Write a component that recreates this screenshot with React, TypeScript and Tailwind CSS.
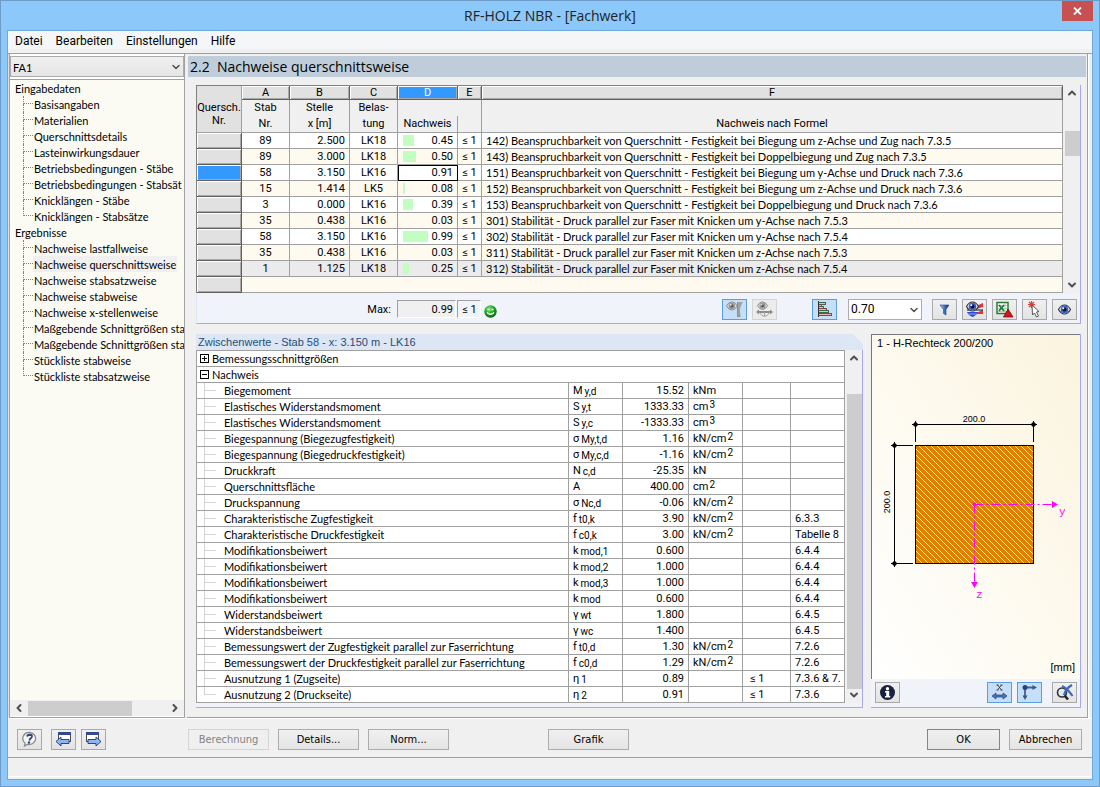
import { ReactNode, useState } from 'react';
import { ChevronDown, ChevronLeft, ChevronRight, ChevronUp } from 'lucide-react';

const menuItems = ['Datei', 'Bearbeiten', 'Einstellungen', 'Hilfe'];

const tree = [
  {
    label: 'Eingabedaten',
    items: [
      'Basisangaben',
      'Materialien',
      'Querschnittsdetails',
      'Lasteinwirkungsdauer',
      'Betriebsbedingungen - Stäbe',
      'Betriebsbedingungen - Stabsät',
      'Knicklängen - Stäbe',
      'Knicklängen - Stabsätze',
    ],
  },
  {
    label: 'Ergebnisse',
    items: [
      'Nachweise lastfallweise',
      'Nachweise querschnittsweise',
      'Nachweise stabsatzweise',
      'Nachweise stabweise',
      'Nachweise x-stellenweise',
      'Maßgebende Schnittgrößen sta',
      'Maßgebende Schnittgrößen sta',
      'Stückliste stabweise',
      'Stückliste stabsatzweise',
    ],
  },
];

const columns = [
  { key: 'A', top: 'Stab', bottom: 'Nr.' },
  { key: 'B', top: 'Stelle', bottom: 'x [m]' },
  { key: 'C', top: 'Belas-', bottom: 'tung' },
  { key: 'D', top: '', bottom: 'Nachweis' },
  { key: 'E', top: '', bottom: '' },
  { key: 'F', top: '', bottom: 'Nachweis nach Formel' },
];

const rows = [
  { stab: 89, x: '2.500', lk: 'LK18', value: '0.45', text: '142) Beanspruchbarkeit von Querschnitt - Festigkeit bei Biegung um z-Achse und Zug nach 7.3.5' },
  { stab: 89, x: '3.000', lk: 'LK18', value: '0.50', text: '143) Beanspruchbarkeit von Querschnitt - Festigkeit bei Doppelbiegung und Zug nach 7.3.5' },
  { stab: 58, x: '3.150', lk: 'LK16', value: '0.91', text: '151) Beanspruchbarkeit von Querschnitt - Festigkeit bei Biegung um y-Achse und Druck nach 7.3.6' },
  { stab: 15, x: '1.414', lk: 'LK5', value: '0.08', text: '152) Beanspruchbarkeit von Querschnitt - Festigkeit bei Biegung um z-Achse und Druck nach 7.3.6' },
  { stab: 3, x: '0.000', lk: 'LK16', value: '0.39', text: '153) Beanspruchbarkeit von Querschnitt - Festigkeit bei Doppelbiegung und Druck nach 7.3.6' },
  { stab: 35, x: '0.438', lk: 'LK16', value: '0.03', text: '301) Stabilität - Druck parallel zur Faser mit Knicken um y-Achse nach 7.5.3' },
  { stab: 58, x: '3.150', lk: 'LK16', value: '0.99', text: '302) Stabilität - Druck parallel zur Faser mit Knicken um y-Achse nach 7.5.4' },
  { stab: 35, x: '0.438', lk: 'LK16', value: '0.03', text: '311) Stabilität - Druck parallel zur Faser mit Knicken um z-Achse nach 7.5.3' },
  { stab: 1, x: '1.125', lk: 'LK18', value: '0.25', text: '312) Stabilität - Druck parallel zur Faser mit Knicken um z-Achse nach 7.5.4' },
];

// label, symbol, index, value, unit, exponent, limit, clause
const details = [
  ['Biegemoment', 'M', 'y,d', '15.52', 'kNm', '', '', ''],
  ['Elastisches Widerstandsmoment', 'S', 'y,t', '1333.33', 'cm', '3', '', ''],
  ['Elastisches Widerstandsmoment', 'S', 'y,c', '-1333.33', 'cm', '3', '', ''],
  ['Biegespannung (Biegezugfestigkeit)', 'σ', 'My,t,d', '1.16', 'kN/cm', '2', '', ''],
  ['Biegespannung (Biegedruckfestigkeit)', 'σ', 'My,c,d', '-1.16', 'kN/cm', '2', '', ''],
  ['Druckkraft', 'N', 'c,d', '-25.35', 'kN', '', '', ''],
  ['Querschnittsfläche', 'A', '', '400.00', 'cm', '2', '', ''],
  ['Druckspannung', 'σ', 'Nc,d', '-0.06', 'kN/cm', '2', '', ''],
  ['Charakteristische Zugfestigkeit', 'f', 't0,k', '3.90', 'kN/cm', '2', '', '6.3.3'],
  ['Charakteristische Druckfestigkeit', 'f', 'c0,k', '3.00', 'kN/cm', '2', '', 'Tabelle 8'],
  ['Modifikationsbeiwert', 'k', 'mod,1', '0.600', '', '', '', '6.4.4'],
  ['Modifikationsbeiwert', 'k', 'mod,2', '1.000', '', '', '', '6.4.4'],
  ['Modifikationsbeiwert', 'k', 'mod,3', '1.000', '', '', '', '6.4.4'],
  ['Modifikationsbeiwert', 'k', 'mod', '0.600', '', '', '', '6.4.4'],
  ['Widerstandsbeiwert', 'γ', 'wt', '1.800', '', '', '', '6.4.5'],
  ['Widerstandsbeiwert', 'γ', 'wc', '1.400', '', '', '', '6.4.5'],
  ['Bemessungswert der Zugfestigkeit parallel zur Faserrichtung', 'f', 't0,d', '1.30', 'kN/cm', '2', '', '7.2.6'],
  ['Bemessungswert der Druckfestigkeit parallel zur Faserrichtung', 'f', 'c0,d', '1.29', 'kN/cm', '2', '', '7.2.6'],
  ['Ausnutzung 1 (Zugseite)', 'η', '1', '0.89', '', '', '≤ 1', '7.3.6 & 7.'],
  ['Ausnutzung 2 (Druckseite)', 'η', '2', '0.91', '', '', '≤ 1', '7.3.6'],
];

function IconButton({ label, active, disabled, children }: { label: string; active?: boolean; disabled?: boolean; children: ReactNode }) {
  const look = active
    ? 'border-[#5b9de0] bg-[#c5dff8]'
    : disabled
      ? 'border-[#d4d4d4] bg-[#ececec]'
      : 'border-[#a9a9a9] bg-linear-to-b from-[#f0f0f0] to-[#e3e3e3]';
  return (
    <button type="button" aria-label={label} disabled={disabled} className={`flex h-[21px] w-[25px] shrink-0 items-center justify-center border ${look}`}>
      {children}
    </button>
  );
}

function PushButton({ children, disabled, primary, wide }: { children: ReactNode; disabled?: boolean; primary?: boolean; wide?: boolean }) {
  const look = disabled
    ? 'border-[#d4d4d4] bg-[#efefef] text-[#838383]'
    : primary
      ? 'border-[#3399ff] bg-linear-to-b from-[#f0f0f0] to-[#e5e5e5]'
      : 'border-[#acacac] bg-linear-to-b from-[#f0f0f0] to-[#e5e5e5]';
  return (
    <button type="button" disabled={disabled} className={`h-[21px] shrink-0 border pt-[2px] text-[11px] leading-4 ${wide ? 'w-[81px]' : 'w-[73px]'} ${look}`}>
      {children}
    </button>
  );
}

function VerticalScrollbar({ before, thumb }: { before: string; thumb: string }) {
  return (
    <div className="flex w-4 shrink-0 flex-col items-center bg-[#f0f0f0] text-[#505050]">
      <ChevronUp size={12} strokeWidth={4} className="my-[2px]" />
      <div className={`w-full ${before}`} />
      <div className={`w-[15px] bg-[#cdcdcd] ${thumb}`} />
      <ChevronDown size={12} strokeWidth={4} className="mt-auto mb-[2px]" />
    </div>
  );
}

/* Toolbar icons */

function EyeShape({ color = '#3a5fc0' }: { color?: string }) {
  return (
    <>
      <path d="M.5 5.500Q3 1 6.500 1Q10 1 12.500 5.500Q10 10 6.500 10Q3 10 .5 5.500Z" fill="#eef1fa" stroke="#2a2a34" strokeWidth="1.100" />
      <circle cx="6.500" cy="5.500" r="3.800" fill={color} />
      <circle cx="6.500" cy="5.500" r="1.900" fill="#0c0f24" />
      <circle cx="5.300" cy="4.200" r="1" fill="#fff" />
    </>
  );
}

function GreyEyeShape() {
  return (
    <>
      <path d="M.5 5.500Q3 1 6.500 1Q10 1 12.500 5.500Q10 10 6.500 10Q3 10 .5 5.500Z" fill="#dcdcdc" stroke="#8a8a8a" strokeWidth="1.100" />
      <circle cx="6.500" cy="5.500" r="3.600" fill="#9a9a9a" />
      <circle cx="6.500" cy="5.500" r="1.800" fill="#5c5c5c" />
      <circle cx="5.300" cy="4.200" r="1" fill="#eee" />
    </>
  );
}

function BeamEyeIcon() {
  return (
    <svg width="19" height="17" viewBox="0 0 19 17">
      <g transform="translate(1 0) scale(.9)">
        <GreyEyeShape />
      </g>
      <path d="M12 1H14L15.500 16H12Z" fill="#8c8c8c" />
      <path d="M18 1Q14.500 5 14.500 15L13 16V1Z" fill="#a2a2a2" />
    </svg>
  );
}

function MomentEyeIcon() {
  return (
    <svg width="19" height="17" viewBox="0 0 19 17">
      <g transform="translate(2 0) scale(.85)">
        <GreyEyeShape />
      </g>
      <path d="M2 11H17" stroke="#8a8a8a" strokeWidth="2" />
      <path d="M4 11Q9.500 20 15 11M9.500 11V15" fill="none" stroke="#a4a4a4" />
      <path d="M1 11L4 8.500V13.500ZM18 11L15 8.500V13.500Z" fill="#8a8a8a" />
    </svg>
  );
}

function BarsIcon() {
  return (
    <svg width="17" height="17" viewBox="0 0 17 17" shapeRendering="crispEdges">
      <path d="M2.500 1.500H9.500V3.500H2.500ZM2.500 5.500H7.500V7.500H2.500Z" fill="#a8e0b0" stroke="#3a6a4a" />
      <path d="M2.500 3.500H5.500V5.500H2.500ZM2.500 7.500H10.500V9.500H2.500Z" fill="#f2b0b0" stroke="#7a4a50" />
      <path d="M2.500 9.500H12.500V11.500H2.500Z" fill="#a8e0b0" stroke="#3a6a4a" />
      <path d="M2.500 12.500H15.500V14.500H2.500Z" fill="#f2b0b0" stroke="#7a4a50" />
      <path d="M2.500 0V16" stroke="#333" />
    </svg>
  );
}

function FunnelIcon() {
  return (
    <svg width="13" height="13" viewBox="0 0 13 13">
      <defs>
        <linearGradient id="funnel">
          <stop offset="0" stopColor="#a9cdf3" />
          <stop offset=".6" stopColor="#2b62b8" />
          <stop offset="1" stopColor="#14295c" />
        </linearGradient>
      </defs>
      <path d="M2 2H11L8 6.500V12L5.500 10.500V6.500Z" fill="url(#funnel)" stroke="#27497f" strokeWidth=".6" />
    </svg>
  );
}

function EyeResultsIcon() {
  return (
    <svg width="19" height="17" viewBox="0 0 19 17">
      <path d="M11 5L18 2V6L11 8ZM11 12L18 9V13L11 13Z" fill="#e0343c" />
      <path d="M2 9H18" stroke="#111" />
      <g transform="translate(1 0)">
        <EyeShape />
      </g>
      <path d="M2 11H13Q12 14 7.500 16Q3 14 2 11Z" fill="#2d49d8" />
      <path d="M3 13H12" stroke="#8ea8f5" />
    </svg>
  );
}

function ExcelIcon() {
  return (
    <svg width="19" height="17" viewBox="0 0 19 17">
      <rect x="2" y="1.500" width="11" height="11" fill="#f4fbf4" stroke="#2c7a3c" strokeWidth="1.500" />
      <path d="M3 4.500H12M3 7.500H12M3 10.500H12M10 2V12" stroke="#a6cfa9" />
      <path d="M4 4L9 10M9 4L4 10" stroke="#217a36" strokeWidth="1.800" />
      <path d="M13 8L18 16H8.500Z" fill="#d2141c" stroke="#7a0c10" strokeWidth=".8" />
    </svg>
  );
}

function PickIcon() {
  return (
    <svg width="17" height="17" viewBox="0 0 17 17">
      <path d="M3 1L8 6M8 1L3 6M5.500 0V7M2 3.500H9" stroke="#e23b3b" strokeWidth="1.200" />
      <path d="M6 4L13 10.500L10.500 11L12.500 15L10.500 16L8.500 12L6.500 14Z" fill="#fff" stroke="#555" strokeWidth="1" />
    </svg>
  );
}

function HelpIcon() {
  return (
    <svg width="17" height="17" viewBox="0 0 17 17">
      <path d="M8.500 1.500A6.500 6 0 1 1 6.500 13.300L3.500 15L4 12A6.500 6 0 0 1 8.500 1.500Z" fill="#f6f6f6" stroke="#8b8b8b" strokeWidth="1.300" />
      <path d="M6 5.500Q6.500 3.700 9 3.700Q11.500 4 10.800 6Q10.400 7 9 8L8.500 9.500" fill="none" stroke="#33447c" strokeWidth="1.900" />
      <circle cx="8" cy="11.500" r="1.200" fill="#33447c" />
    </svg>
  );
}

function WindowArrowIcon({ back }: { back?: boolean }) {
  return (
    <svg width="17" height="17" viewBox="0 0 17 17">
      <rect x={back ? 3.5 : 1.5} y="1.500" width="12" height="9" fill="#fff" stroke="#4b4b4b" />
      <rect x={back ? 3 : 1} y="1" width="13" height="3" fill="#33488f" />
      {back ? (
        <path d="M1 10.500L6 6V8.500H14V12.500H6V15Z" fill="#8db4ee" stroke="#27478f" />
      ) : (
        <path d="M16 10.500L11 6V8.500H3V12.500H11V15Z" fill="#8db4ee" stroke="#27478f" />
      )}
    </svg>
  );
}

function InfoIcon() {
  return (
    <svg width="17" height="17" viewBox="0 0 17 17">
      <circle cx="8.500" cy="8.500" r="7.500" fill="#16223f" />
      <circle cx="8.500" cy="4.700" r="1.700" fill="#fff" />
      <path d="M6 7H10.200V12H11.200V13.500H6V12H7.200V8.400H6Z" fill="#fff" />
    </svg>
  );
}

function DimensionIcon() {
  return (
    <svg width="17" height="17" viewBox="0 0 17 17">
      <path d="M6.500 1L10.500 6M10.500 1L6.500 6M5.500 1H7.500M9.500 1H11.500M5.500 6H7.500M9.500 6H11.500" stroke="#333" strokeWidth=".9" />
      <path d="M1 12L5 9V11H12V9L16 12L12 15V13H5V15Z" fill="#4d74c0" stroke="#22407c" strokeWidth=".7" />
    </svg>
  );
}

function AxesIcon() {
  return (
    <svg width="17" height="17" viewBox="0 0 17 17">
      <path d="M4 13V3.500H13" fill="none" stroke="#4a5f8c" strokeWidth="1.800" />
      <path d="M16 3.500L11.500 1V6ZM4 16L1.500 11.500H6.500Z" fill="#3a5590" />
      <circle cx="4" cy="3.500" r="2.500" fill="#27407c" />
    </svg>
  );
}

function ZoomResetIcon() {
  return (
    <svg width="19" height="17" viewBox="0 0 19 17">
      <circle cx="7" cy="8.500" r="4.500" fill="#dfe8f5" stroke="#333" strokeWidth="1.600" />
      <path d="M9.500 11.500L13 15.500" stroke="#222" strokeWidth="2.600" />
      <path d="M7 2Q12 4 17.500 12M17 1Q11 4 9 11" fill="none" stroke="#3f68b8" strokeWidth="2.200" />
    </svg>
  );
}

function SmileyIcon() {
  return (
    <svg width="13" height="13" viewBox="0 0 13 13" role="img" aria-label="Nachweis erfüllt">
      <defs>
        <radialGradient id="smiley" cx=".4" cy=".3" r=".8">
          <stop offset="0" stopColor="#7dee6c" />
          <stop offset=".5" stopColor="#1f9e26" />
          <stop offset="1" stopColor="#0a5212" />
        </radialGradient>
      </defs>
      <circle cx="6.500" cy="6.500" r="6.200" fill="url(#smiley)" />
      <path d="M3.500 4.500H5.500M7.500 4.500H9.500" stroke="#fff" strokeWidth="1.300" />
      <path d="M3 7.500Q6.500 11 10 7.500" fill="none" stroke="#fff" strokeWidth="1.200" />
    </svg>
  );
}

function SectionDrawing() {
  return (
    <svg className="h-full w-full" viewBox="0 0 208 328" role="img" aria-label="H-Rechteck 200/200">
      <defs>
        <pattern id="hatch" width="6" height="6" patternUnits="userSpaceOnUse">
          <rect width="6" height="6" fill="#e08000" />
          <path d="M-1 -1L7 7M-1 5L1 7M5 -1L7 1" stroke="#ffe9c8" strokeWidth="1" />
        </pattern>
      </defs>
      <g stroke="#000" fill="none">
        <rect x="43.500" y="94.500" width="118" height="118" fill="url(#hatch)" />
        <path d="M40 73.500H165M43.500 70V91M161.500 70V91" />
        <path d="M22.500 91V216M19 94.500H41M19 212.500H41" />
      </g>
      <g fill="#000">
        <path d="M43.500 70.500L46.500 73.500L43.500 76.500L40.500 73.500Z" />
        <path d="M161.500 70.500L164.500 73.500L161.500 76.500L158.500 73.500Z" />
        <path d="M22.500 91.500L25.500 94.500L22.500 97.500L19.500 94.500Z" />
        <path d="M22.500 209.500L25.500 212.500L22.500 215.500L19.500 212.500Z" />
      </g>
      <g className="font-['Liberation_Sans',sans-serif] text-[9px]" fill="#000" textAnchor="middle">
        <text x="102" y="71">200.0</text>
        <text transform="translate(18 151) rotate(-90)">200.0</text>
      </g>
      <g stroke="#ff00ff" strokeDasharray="9 3 2 3">
        <path d="M102.500 153.500H180M102.500 153.500V231" />
      </g>
      <g fill="#ff00ff">
        <circle cx="102.500" cy="153.500" r="2" />
        <path d="M186 153.500L180 150V157ZM102.500 237L99 231H106Z" />
      </g>
      <g className="font-['Liberation_Mono',monospace] text-[11px]" fill="#ff00ff">
        <text x="187" y="164">y</text>
        <text x="104" y="247">z</text>
      </g>
    </svg>
  );
}

function TreeItem({ label, last, selected, onSelect }: { label: string; last: boolean; selected: boolean; onSelect: () => void }) {
  return (
    <li className="flex h-4 pl-[13px]">
      <span className="flex w-[10px] shrink-0 flex-col">
        <span className="h-2 border-b border-l border-dotted border-[#808080]" />
        {!last && <span className="h-2 border-l border-dotted border-[#808080]" />}
      </span>
      <button type="button" onClick={onSelect} className={`h-4 shrink-0 px-px whitespace-nowrap ${selected ? 'bg-[#f0f0f0]' : ''}`}>
        {label}
      </button>
    </li>
  );
}

function Sidebar() {
  const [selected, setSelected] = useState('Nachweise querschnittsweise');

  return (
    <nav className="flex w-[176px] shrink-0 flex-col border border-t-0 border-[#a0a0a0] bg-white">
      <div className="relative mt-[2px]">
        <select aria-label="Bemessungsfall" className="h-[21px] w-full appearance-none border border-[#acacac] bg-linear-to-b from-[#f0f0f0] to-[#e5e5e5] px-[2px] pt-px text-[11px]">
          <option>FA1</option>
        </select>
        <ChevronDown size={12} strokeWidth={3} className="pointer-events-none absolute top-[5px] right-[2px] text-[#505050]" />
      </div>
      <div className="mt-[2px] flex-1 overflow-hidden border-t border-[#a0a0a0] bg-[#fbfbf3]">
        {tree.map((group) => (
          <div key={group.label}>
            <div className="h-4 pl-[5px]">{group.label}</div>
            <ul>
              {group.items.map((item, i) => (
                <TreeItem key={i} label={item} last={i === group.items.length - 1} selected={item === selected} onSelect={() => setSelected(item)} />
              ))}
            </ul>
          </div>
        ))}
      </div>
      <div className="mb-px flex h-4 items-center bg-[#f0f0f0] text-[#505050]">
        <ChevronLeft size={12} strokeWidth={4} className="mx-[3px]" />
        <div className="h-[15px] w-[104px] bg-[#cdcdcd]" />
        <ChevronRight size={12} strokeWidth={4} className="mr-[3px] ml-auto" />
      </div>
    </nav>
  );
}

function ResultsTable() {
  const cell = 'border-r border-b border-[#a0a0a0] overflow-hidden whitespace-nowrap';
  const raised = 'border-r border-b border-[#606060] shadow-[inset_1px_1px_#ffffff,inset_-1px_-1px_#a8a8a8]';

  return (
    <table className="w-full table-fixed border-separate border-spacing-0 border-t border-l border-[#808080] text-center">
      <colgroup>
        <col className="w-[45px]" />
        <col className="w-12" />
        <col className="w-[60px]" />
        <col className="w-12" />
        <col className="w-[60px]" />
        <col className="w-6" />
        <col />
      </colgroup>
      <thead>
        <tr className="h-[14px]">
          <th rowSpan={3} className="border-r border-b border-[#a0a0a0] bg-[#e1e1e1] p-0 pt-[10px] font-normal">
            <div className="leading-[13px]">Quersch.</div>
            <div className="leading-[13px]">Nr.</div>
          </th>
          {columns.map((c) => (
            <th key={c.key} className={`h-[14px] p-0 leading-[13px] font-normal ${raised} ${c.key === 'D' ? 'bg-[#3399ff] text-white' : 'bg-[#e1e1e1]'}`}>
              {c.key}
            </th>
          ))}
        </tr>
        <tr className="h-4">
          {columns.map((c) => (
            <th key={c.key} className={`h-4 p-0 leading-[14px] font-normal ${c.key === 'D' ? '' : 'border-r border-[#a0a0a0]'}`}>
              {c.top}
            </th>
          ))}
        </tr>
        <tr className="h-[17px]">
          {columns.map((c) => (
            <th key={c.key} className="h-[17px] border-r border-b border-[#a0a0a0] p-0 leading-[14px] font-normal">
              {c.bottom}
            </th>
          ))}
        </tr>
      </thead>
      <tbody>
        {rows.map((row, i) => {
          const current = i === 2;
          const bg = i === rows.length - 1 ? 'bg-[#ebebeb]' : i % 2 ? 'bg-[#fffaf0]' : 'bg-white';
          return (
            <tr key={row.text} className={`h-4 ${bg}`}>
              <th className={`h-4 p-0 ${raised} ${current ? 'bg-[#3399ff]' : 'bg-[#e1e1e1]'}`} />
              <td className={`p-0 ${cell}`}>{row.stab}</td>
              <td className={`p-0 pr-1 text-right ${cell}`}>{row.x}</td>
              <td className={`p-0 ${cell}`}>{row.lk}</td>
              <td className={`p-0 ${cell} ${current ? 'outline-1 -outline-offset-1 outline-black' : ''}`}>
                <div className="flex items-center pr-1 pl-[5px]">
                  {!current && row.value !== '0.03' && (
                    <span className="h-[11px] bg-[#c1ffc1]" style={{ width: Math.round(Number(row.value) * 25) }} />
                  )}
                  <span className="ml-auto">{row.value}</span>
                </div>
              </td>
              <td className={`p-0 ${cell}`}>≤ 1</td>
              <td className={`p-0 pl-1 text-left font-['Lato',Arial,sans-serif] ${cell}`}>{row.text}</td>
            </tr>
          );
        })}
        <tr className="h-4 bg-[#fffaf0]">
          <th className={`h-4 bg-[#e1e1e1] p-0 ${raised}`} />
          <td colSpan={6} className={`p-0 ${cell}`} />
        </tr>
      </tbody>
    </table>
  );
}

function ResultsToolbar() {
  return (
    <div className="flex h-[31px] items-center border-b border-l border-b-[#a8a8f0] border-l-[#dce6f4] bg-[#f0f4fa] pt-[2px] pr-[3px]">
      <label htmlFor="max" className="w-[194px] text-right">Max:</label>
      <input id="max" readOnly value="0.99" className="ml-[6px] h-[18px] w-[59px] border border-t-[#a0a0a0] border-r-white border-b-white border-l-[#a0a0a0] bg-[#f0f0f0] pr-[2px] text-right" />
      <span className="ml-px h-[18px] w-6 border border-t-[#a0a0a0] border-r-white border-b-white border-l-[#a0a0a0] pt-px pl-px text-center">≤ 1</span>
      <span className="ml-[3px] pt-1"><SmileyIcon /></span>
      <div className="ml-auto flex items-center">
        <div className="flex gap-[5px]">
          <IconButton label="Stäbe einblenden" active><BeamEyeIcon /></IconButton>
          <IconButton label="Ergebnisverläufe" disabled><MomentEyeIcon /></IconButton>
        </div>
        <div className="ml-[35px] flex items-center gap-[11px]">
          <IconButton label="Farbbalken" active><BarsIcon /></IconButton>
          <div className="relative">
            <select aria-label="Grenzwert" className="block h-[21px] w-[74px] appearance-none border border-[#acacac] bg-white px-[2px] text-[12px]">
              <option>0.70</option>
            </select>
            <ChevronDown size={12} strokeWidth={3} className="pointer-events-none absolute top-[5px] right-[2px] text-[#505050]" />
          </div>
        </div>
        <div className="ml-[10px] flex gap-[5px]">
          <IconButton label="Filter"><FunnelIcon /></IconButton>
          <IconButton label="Ausnutzung anzeigen"><EyeResultsIcon /></IconButton>
          <IconButton label="Excel-Export"><ExcelIcon /></IconButton>
          <IconButton label="Stab auswählen"><PickIcon /></IconButton>
          <IconButton label="Ansicht">
            <svg width="13" height="11" viewBox="0 0 13 11"><EyeShape /></svg>
          </IconButton>
        </div>
      </div>
    </div>
  );
}

function DetailsTable() {
  const cell = 'h-4 border-r border-b border-[#a0a0a0] p-0 whitespace-nowrap overflow-hidden';

  return (
    <table className="min-w-0 flex-1 table-fixed border-separate border-spacing-0 border-t border-l border-[#a0a0a0] bg-white text-left font-['Roboto',Arial,sans-serif]">
      <colgroup>
        <col />
        <col className="w-[54px]" />
        <col className="w-[66px]" />
        <col className="w-[54px]" />
        <col className="w-12" />
        <col className="w-[54px]" />
      </colgroup>
      <tbody>
        {['Bemessungsschnittgrößen', 'Nachweis'].map((label, i) => (
          <tr key={label}>
            <td colSpan={6} className={`${cell} font-['Lato',Arial,sans-serif]`}>
              <div className="flex h-[15px] items-center gap-[3px] pl-[3px]">
                <svg width="9" height="9" viewBox="0 0 9 9" stroke="#000" fill="none">
                  <rect x=".5" y=".5" width="8" height="8" />
                  <path d={i ? 'M2 4.500H7' : 'M2 4.500H7M4.500 2V7'} />
                </svg>
                {label}
              </div>
            </td>
          </tr>
        ))}
        {details.map(([label, symbol, index, value, unit, power, limit, clause], i) => (
          <tr key={i}>
            <td className={`${cell} font-['Lato',Arial,sans-serif]`}>
              <div className="flex h-[15px] pl-[7px]">
                <span className="flex w-3 shrink-0 flex-col">
                  <span className="h-2 border-b border-l border-[#d4d4d4]" />
                  {i < details.length - 1 && <span className="h-[7px] border-l border-[#d4d4d4]" />}
                </span>
                <span className="pl-2">{label}</span>
              </div>
            </td>
            <td className={cell}>
              <div className="flex h-[15px] gap-[2px] pl-1">
                {symbol}
                <span className="pt-px text-[10px]">{index}</span>
              </div>
            </td>
            <td className={`${cell} pr-1 text-right`}>{value}</td>
            <td className={cell}>
              <div className="flex h-[15px] gap-px pl-1">
                {unit}
                <span className="text-[10px] leading-3">{power}</span>
              </div>
            </td>
            <td className={`${cell} pl-[7px]`}>{limit}</td>
            <td className={`${cell} pl-1`}>{clause}</td>
          </tr>
        ))}
      </tbody>
    </table>
  );
}

function SectionPanel() {
  return (
    <section className="flex w-[210px] shrink-0 flex-col border-r border-b border-[#a8a8f0] text-[11px]">
      <div className="flex flex-1 flex-col border-t border-l border-[#7a7a7a] bg-linear-to-tr from-white to-[#fbf4de]">
        <h2 className="h-4 pl-[5px] leading-4">1 - H-Rechteck 200/200</h2>
        <div className="relative min-h-0 flex-1">
          <SectionDrawing />
          <span className="absolute right-[5px] bottom-1">[mm]</span>
        </div>
      </div>
      <div className="flex h-7 items-start bg-[#f0f4fa] pt-[3px] pr-[3px] pl-1">
        <IconButton label="Info"><InfoIcon /></IconButton>
        <div className="ml-auto flex gap-[5px]">
          <IconButton label="Bemaßung" active><DimensionIcon /></IconButton>
          <IconButton label="Achsen" active><AxesIcon /></IconButton>
        </div>
        <div className="ml-[10px]">
          <IconButton label="Ansicht zurücksetzen"><ZoomResetIcon /></IconButton>
        </div>
      </div>
    </section>
  );
}

export default function App() {
  return (
    <div className="flex min-h-screen flex-col border border-[#6f9bc8] bg-[#8dc8fa] px-[6px] pb-[6px] font-['Liberation_Sans',Arial,sans-serif] text-[11px] leading-[15px] text-black">
      <header className="grid h-[29px] shrink-0 grid-cols-[1fr_auto_1fr] items-start">
        <h1 className="col-start-2 pt-[3px] font-['Open_Sans','Segoe_UI',sans-serif] text-[14px] leading-6 text-[#222]">RF-HOLZ NBR - [Fachwerk]</h1>
        <button type="button" aria-label="Schließen" className="flex h-5 w-[31px] items-center justify-center justify-self-end bg-[#c75050]">
          <svg width="9" height="8" viewBox="0 0 9 8" stroke="#fff" strokeWidth="1.800"><path d="M1 .5L8 7.500M8 .5L1 7.500" /></svg>
        </button>
      </header>

      <div className="flex flex-1 flex-col border border-[#6fa8dc] bg-[#f0f0f0]">
        <nav className="flex h-[18px] items-center gap-[13px] bg-[#f5f6f7] pt-[2px] pl-[7px] font-['Roboto','Segoe_UI',sans-serif] text-[12px] leading-4">
          {menuItems.map((item) => (
            <button key={item} type="button">{item}</button>
          ))}
        </nav>

        <div className="mt-1 flex flex-1 border-t border-[#a0a0a0]">
          <div className="flex border-l border-[#e0e0e0] font-['Lato',Tahoma,sans-serif] leading-[17px]">
            <Sidebar />
          </div>

          <main className="ml-[2px] flex min-w-0 flex-1 flex-col border-r border-b border-[#a0a0a0] pt-[2px] pl-px">
            <h2 className="mr-px h-[21px] bg-[#bfcddb] pl-[2px] font-['Open_Sans','Segoe_UI',sans-serif] text-[14px] leading-[22px]">2.2&nbsp; Nachweise querschnittsweise</h2>
            <div className="flex flex-1 flex-col pt-2 pr-[6px] pb-[9px] pl-2">
              <section className="border-r border-[#a8a8f0] font-['Roboto',Arial,sans-serif]">
                <div className="flex gap-px">
                  <ResultsTable />
                  <VerticalScrollbar before="h-[30px]" thumb="h-[25px]" />
                </div>
                <ResultsToolbar />
              </section>

              <div className="mt-[10px] flex flex-1 gap-2">
                <section className="flex min-w-0 flex-1 flex-col">
                  <h2 className="h-4 bg-[#dce6f4] pl-[2px] leading-4 text-[#1f4e79] [clip-path:polygon(0_0,calc(100%-10px)_0,100%_10px,100%_100%,0_100%)]">
                    Zwischenwerte - Stab 58 - x: 3.150 m - LK16
                  </h2>
                  <div className="flex flex-1 items-start gap-px border-r border-b border-[#a8a8f0] bg-[#f0f4fa]">
                    <DetailsTable />
                    <div className="flex self-stretch pb-1">
                      <VerticalScrollbar before="h-7" thumb="grow" />
                    </div>
                  </div>
                </section>
                <SectionPanel />
              </div>
            </div>
          </main>
          <div className="w-[4px] border-l border-white" />
        </div>

        <footer className="flex h-[39px] shrink-0 items-center border-t border-white pt-[2px] pr-[10px] pl-[9px] font-['DejaVu_Sans_Condensed',Tahoma,sans-serif]">
          <IconButton label="Hilfe"><HelpIcon /></IconButton>
          <div className="ml-[9px] flex gap-[5px]">
            <IconButton label="Vorherige Maske"><WindowArrowIcon back /></IconButton>
            <IconButton label="Nächste Maske"><WindowArrowIcon /></IconButton>
          </div>
          <div className="ml-[82px] flex gap-[9px]">
            <PushButton wide disabled>Berechnung</PushButton>
            <PushButton wide>Details...</PushButton>
            <PushButton wide>Norm...</PushButton>
          </div>
          <div className="ml-[99px]">
            <PushButton wide>Grafik</PushButton>
          </div>
          <div className="ml-auto flex gap-[9px]">
            <PushButton primary>OK</PushButton>
            <PushButton>Abbrechen</PushButton>
          </div>
        </footer>
        <div className="mb-[2px] h-5 border-t border-b border-t-[#a0a0a0] border-b-white" />
      </div>
    </div>
  );
}
